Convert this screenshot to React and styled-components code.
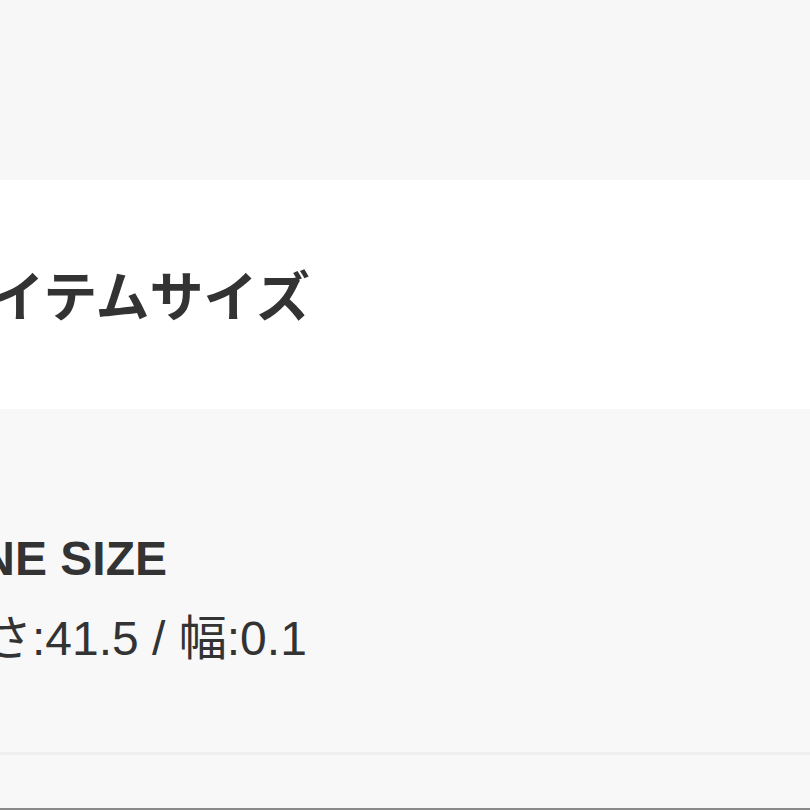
import React from "react";
import styled, { createGlobalStyle } from "styled-components";

const Global = createGlobalStyle`
  html, body { margin: 0; padding: 0; background: #f7f7f7; }
  body { font-family: "Liberation Sans", "Noto Sans CJK JP", sans-serif; color: #333; }
`;

const Page = styled.div`
  width: 810px;
  height: 810px;
  overflow: hidden;
  display: flex;
  flex-direction: column;
  background: #f7f7f7;
  border-bottom: 2px solid #8a8a8a;
  box-sizing: border-box;
`;

const TopBand = styled.div`
  height: 180px;
  flex: none;
  background: #f7f7f7;
`;

const HeaderBand = styled.div`
  height: 229px;
  flex: none;
  background: #ffffff;
  display: flex;
  align-items: center;
  overflow: hidden;
`;

const Title = styled.h2`
  margin: 0 0 0 -61px;
  white-space: nowrap;
  font-family: "Noto Sans CJK JP", sans-serif;
  font-weight: 700;
  font-size: 54px;
  line-height: 1.2;
  color: #333;
`;

const Detail = styled.div`
  background: #f8f8f8;
  height: 346px;
  flex: none;
  box-sizing: border-box;
  padding-top: 122px;
  overflow: hidden;
  border-bottom: 3px solid #efefef;
`;

const SizeName = styled.div`
  margin-left: -57px;
  white-space: nowrap;
  font-family: "Liberation Sans", "Noto Sans CJK JP", sans-serif;
  font-weight: 700;
  font-size: 48px;
  line-height: 56px;
  color: #333;
`;

const SizeValue = styled.div`
  margin: 24px 0 0 -64px;
  white-space: nowrap;
  font-family: "Liberation Sans", "Noto Sans CJK JP", sans-serif;
  font-weight: 400;
  font-size: 48px;
  line-height: 56px;
  color: #333;
`;

const Bottom = styled.div`
  flex: 1;
  background: #f8f8f8;
`;

export default function App() {
  return (
    <>
      <Global />
      <Page>
        <TopBand />
        <HeaderBand>
          <Title>アイテムサイズ</Title>
        </HeaderBand>
        <Detail>
          <SizeName>ONE SIZE</SizeName>
          <SizeValue>長さ:41.5 / 幅:0.1</SizeValue>
        </Detail>
        <Bottom />
      </Page>
    </>
  );
}
